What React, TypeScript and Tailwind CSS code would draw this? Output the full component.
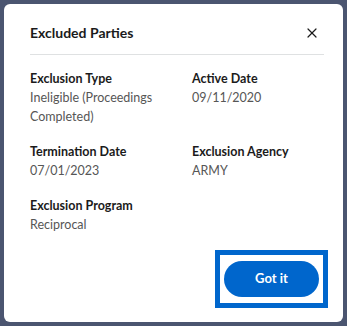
import { X } from 'lucide-react';

export default function App() {
  const fields = [
    { label: 'Exclusion Type', value: 'Ineligible (Proceedings Completed)' },
    { label: 'Active Date', value: '09/11/2020' },
    { label: 'Termination Date', value: '07/01/2023' },
    { label: 'Exclusion Agency', value: 'ARMY' },
    { label: 'Exclusion Program', value: 'Reciprocal' },
  ];

  return (
    <div
      className="h-[326px] w-[347px] bg-[#4b5570] p-[4px] overflow-hidden"
      style={{ fontFamily: 'Lato, "Noto Sans", sans-serif' }}
    >
      <div className="h-[318px] w-[339px] rounded-[6px] bg-white flex flex-col">
        {/* header */}
        <div className="ml-[26px] mr-[19px] mt-[19px] flex h-[32px] items-start justify-between border-b border-[#dfe1e2]">
          <h2 className="text-[14px] font-bold leading-[20px] text-[#1b1b1b]">Excluded Parties</h2>
          <X className="mt-[2px] mr-[4px] h-[16px] w-[16px] text-[#1b1b1b]" strokeWidth={1.8} />
        </div>

        {/* fields */}
        <div className="ml-[26px] mr-[19px] mt-[15px] grid grid-cols-[162px_1fr] gap-y-[17px]">
          {fields.map((f) => (
            <div key={f.label}>
              <p className="text-[12.5px] font-bold leading-[18px] text-[#1b1b1b]">{f.label}</p>
              <p className="text-[12.5px] leading-[19px] text-[#565656]">{f.value}</p>
            </div>
          ))}
        </div>

        {/* footer */}
        <div className="mt-auto mb-[14px] mr-[15px] flex justify-end">
          <div className="border-[5px] border-[#0066cc] bg-white px-[4px] py-[6px]">
            <button className="block h-[36px] w-[95px] rounded-full bg-[#0066cc] text-[13px] font-bold text-white">
              Got it
            </button>
          </div>
        </div>
      </div>
    </div>
  );
}
